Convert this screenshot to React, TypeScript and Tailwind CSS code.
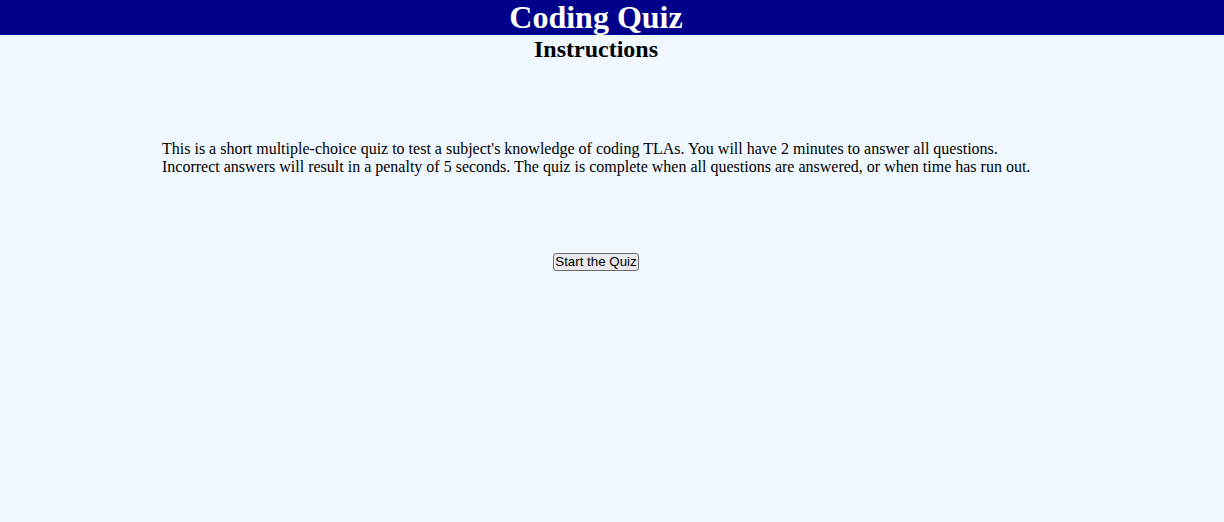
const App = () => {
    return (
        <div className="min-h-[522px] bg-[#f0f8ff] font-['Liberation_Serif','Times_New_Roman',serif] text-black">
            <header className="h-[35px] bg-[#00008b] text-white">
                <h1 className="w-[1192px] text-center text-[32px] font-bold leading-[34px]">Coding Quiz</h1>
            </header>
            <h2 className="w-[1192px] text-center text-[24px] font-bold leading-[28px]">Instructions</h2>
            <p className="mt-[77px] ml-[162px] w-[880px] text-[16px] leading-[18.4px]">
                This is a short multiple-choice quiz to test a subject's knowledge of coding TLAs. You will have 2 minutes to answer all questions. Incorrect answers will result in a penalty of 5 seconds. The quiz is complete when all questions are answered, or when time has run out.
            </p>
            <div className="mt-[72px] w-[1192px] text-center">
                <button className="h-[18px] rounded-[3px] border border-[#6b6b6b] bg-[#e9e9ed] px-[1px] font-['Liberation_Sans',Arial,sans-serif] text-[13.33px] leading-[16px] text-black">
                    Start the Quiz
                </button>
            </div>
        </div>
    );
};

export default App;
